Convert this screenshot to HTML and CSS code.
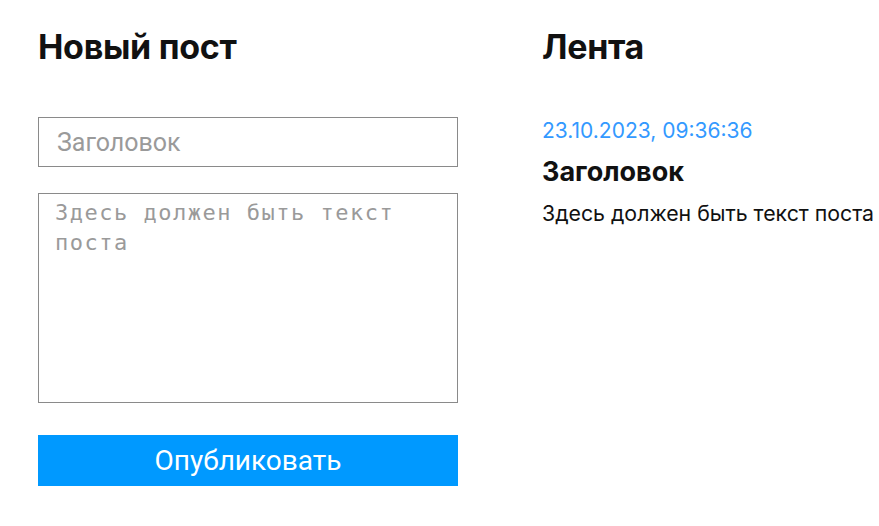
FILE: index.html
```html
<!DOCTYPE html>
<html lang="ru">
<head>
<meta charset="utf-8">
<link rel="stylesheet" href="styles.css">
</head>
<body>
<div class="page">
  <section class="col col-left">
    <h1 class="title">Новый пост</h1>
    <form class="form">
      <input class="field" type="text" placeholder="Заголовок">
      <textarea class="area" placeholder="Здесь должен быть текст поста"></textarea>
      <button class="btn" type="button">Опубликовать</button>
    </form>
  </section>
  <section class="col col-right">
    <h1 class="title">Лента</h1>
    <article class="post">
      <div class="date">23.10.2023, 09:36:36</div>
      <h2 class="post-title">Заголовок</h2>
      <p class="post-text">Здесь должен быть текст поста</p>
    </article>
  </section>
</div>
</body>
</html>
```
FILE: styles.css
```css
html, body {
  margin: 0;
  padding: 0;
  background: #fff;
}
body {
  font-family: Inter, "Noto Sans", sans-serif;
  color: #111;
  overflow: hidden;
}
.page {
  display: flex;
  gap: 84px;
  padding: 26px 0 0 38px;
}
.col {
  flex: 0 0 420px;
  display: flex;
  flex-direction: column;
}
.col-right {
  flex: 0 0 340px;
}
.title {
  margin: 0;
  font-size: 34px;
  font-weight: 700;
  line-height: 42px;
  letter-spacing: -0.3px;
}
.form {
  display: flex;
  flex-direction: column;
  margin-top: 49px;
}
.field {
  box-sizing: border-box;
  height: 50px;
  width: 420px;
  border: 1px solid #8a8a8a;
  padding: 0 18px;
  font-family: Roboto, sans-serif;
  font-size: 25px;
  outline: none;
}
.field::placeholder {
  color: #9a9a9a;
}
.area {
  box-sizing: border-box;
  margin-top: 26px;
  height: 210px;
  width: 420px;
  border: 1px solid #8a8a8a;
  padding: 4px 16px;
  font-family: "DejaVu Sans Mono", monospace;
  font-size: 22px;
  letter-spacing: 1.5px;
  line-height: 30px;
  resize: none;
  outline: none;
}
.area::placeholder {
  color: #9a9a9a;
}
.btn {
  margin-top: 32px;
  height: 51px;
  width: 420px;
  border: none;
  background: #0099ff;
  color: #fff;
  font-family: Roboto, sans-serif;
  font-size: 28px;
  cursor: pointer;
}
.post {
  margin-top: 50px;
}
.date {
  color: #3399ff;
  font-size: 21px;
  line-height: 26px;
}
.post-title {
  margin: 12px 0 0;
  font-size: 27px;
  font-weight: 700;
  line-height: 32px;
}
.post-text {
  margin: 12px 0 0;
  font-size: 21.3px;
  line-height: 26px;
}
```
